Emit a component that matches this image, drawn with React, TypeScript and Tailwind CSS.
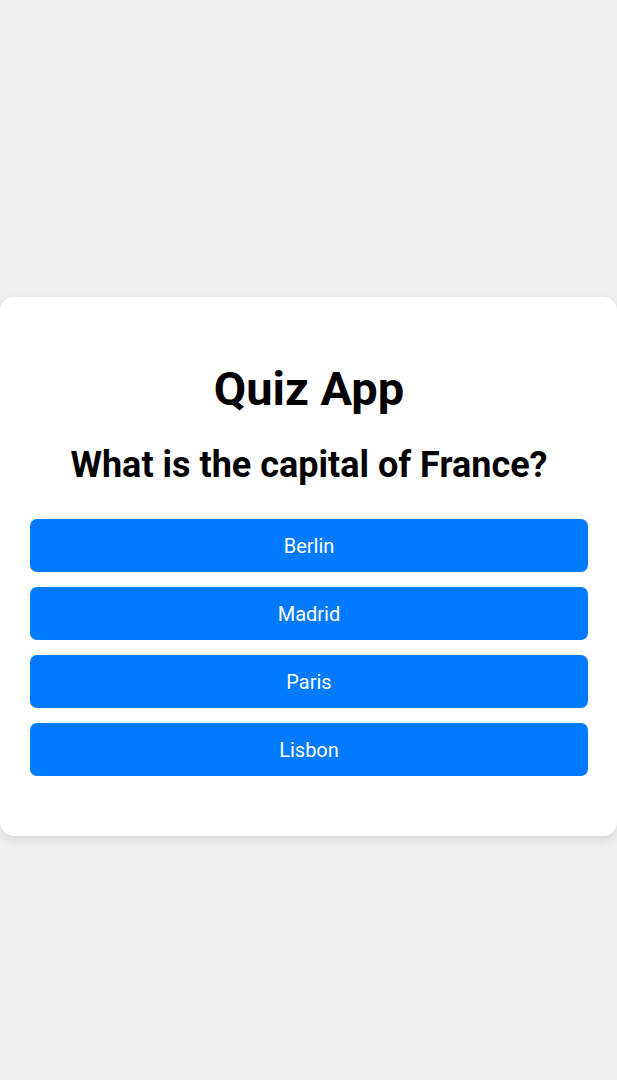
export default function App() {
    const options = ['Berlin', 'Madrid', 'Paris', 'Lisbon']

    return (
        <div
            className="min-h-screen bg-[#f0f0f0] pt-[297px]"
            style={{ fontFamily: 'Roboto, "Liberation Sans", sans-serif' }}
        >
            <div className="rounded-[14px] bg-white pl-[30px] pr-[29px] pt-[64px] pb-[60px] shadow-[0_4px_12px_rgba(0,0,0,0.1)]">
                <h1 className="text-center text-[47px] leading-[56px] font-bold text-black">Quiz App</h1>
                <h2 className="mt-[26px] text-center text-[36px] leading-[44px] font-bold text-black">
                    What is the capital of France?
                </h2>
                <div className="mt-[32px] flex flex-col gap-[15px]">
                    {options.map((option) => (
                        <button
                            key={option}
                            className="h-[53px] w-full rounded-[7px] bg-[#007bff] text-[20px] text-white"
                        >
                            {option}
                        </button>
                    ))}
                </div>
            </div>
        </div>
    )
}
